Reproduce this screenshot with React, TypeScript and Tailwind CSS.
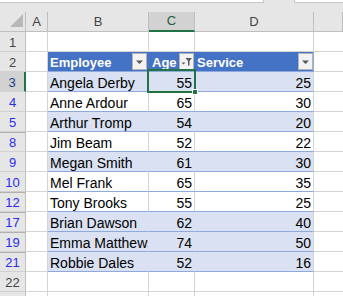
import React from 'react'

type Row = {
  n: number
  kind: 'blank' | 'header' | 'data'
  name?: string
  age?: number
  service?: number
  band?: boolean
  afterHidden?: boolean
}

const rows: Row[] = [
  { n: 1, kind: 'blank' },
  { n: 2, kind: 'header' },
  { n: 3, kind: 'data', name: 'Angela Derby', age: 55, service: 25, band: true },
  { n: 4, kind: 'data', name: 'Anne Ardour', age: 65, service: 30 },
  { n: 5, kind: 'data', name: 'Arthur Tromp', age: 54, service: 20, band: true },
  { n: 8, kind: 'data', name: 'Jim Beam', age: 52, service: 22, afterHidden: true },
  { n: 9, kind: 'data', name: 'Megan Smith', age: 61, service: 30, band: true },
  { n: 10, kind: 'data', name: 'Mel Frank', age: 65, service: 35 },
  { n: 12, kind: 'data', name: 'Tony Brooks', age: 55, service: 25, afterHidden: true },
  { n: 17, kind: 'data', name: 'Brian Dawson', age: 62, service: 40, band: true, afterHidden: true },
  { n: 19, kind: 'data', name: 'Emma Matthews', age: 74, service: 50, band: true, afterHidden: true },
  { n: 21, kind: 'data', name: 'Robbie Dales', age: 52, service: 16, band: true, afterHidden: true },
  { n: 22, kind: 'blank' },
  { n: 23, kind: 'blank' },
]

const font = { fontFamily: '"Liberation Sans", Arial, sans-serif' }

function DropButton({ filtered = false }: { filtered?: boolean }) {
  return (
    <div className="w-[15px] h-[17px] shrink-0 border border-[#b4b4b4] bg-[#f3f3f3] flex items-center justify-center">
      {filtered ? (
        <svg width="13" height="15" viewBox="0 0 13 15">
          <path d="M1.5 8.5 L5.5 8.5 L3.5 10.5 Z" fill="#595959" />
          <path d="M5.5 4 L12 4 L9.5 7 L9.5 11.5 L8 11.5 L8 7 Z" fill="#595959" />
        </svg>
      ) : (
        <svg width="9" height="6" viewBox="0 0 9 6">
          <path d="M1 1.5 L8 1.5 L4.5 5 Z" fill="#595959" />
        </svg>
      )}
    </div>
  )
}

function RowHeader({ row }: { row: Row }) {
  const selected = row.n === 3
  const filtered = row.kind === 'data'
  return (
    <div
      className={`h-[20px] flex items-center justify-center pt-[2px] text-[13px] border-b border-[#d0d0d0] ${
        selected ? 'bg-[#d2d2d2] border-r-2 border-r-[#217346] text-[#1a3a8c]' : 'bg-[#e6e6e6] border-r border-r-[#bfbfbf]'
      } ${filtered && !selected ? 'text-[#2b2bf0]' : ''} ${!filtered ? 'text-[#444444]' : ''} ${
        row.afterHidden ? 'shadow-[inset_0_1px_0_#b0b0b0]' : ''
      }`}
    >
      {row.n <= 22 ? row.n : ''}
    </div>
  )
}

function SheetRow({ row }: { row: Row }) {
  if (row.kind === 'blank') {
    return (
      <>
        <RowHeader row={row} />
        <div className="h-[20px] border-r border-b border-[#d4d4d4]" />
        <div className="h-[20px] border-r border-b border-[#d4d4d4]" />
        <div className="h-[20px] border-r border-b border-[#d4d4d4]" />
        <div className="h-[20px] border-r border-b border-[#d4d4d4]" />
        <div className="h-[20px] border-b border-[#d4d4d4]" />
      </>
    )
  }

  if (row.kind === 'header') {
    return (
      <>
        <RowHeader row={row} />
        <div className="h-[20px] border-r border-b border-[#d4d4d4]" />
        <div className="h-[20px] bg-[#4472c4] border-r border-r-[#4472c4] border-b border-b-[#8ea9db] flex items-center justify-between pl-[2px] pr-[1px] text-white font-bold text-[13px]">
          <span className="pt-[2px]">Employee</span>
          <DropButton />
        </div>
        <div className="h-[20px] bg-[#4472c4] border-r border-r-[#4472c4] border-b border-b-[#8ea9db] flex items-center justify-between pl-[3px] pr-0 text-white font-bold text-[13px]">
          <span className="pt-[2px]">Age</span>
          <DropButton filtered />
        </div>
        <div className="h-[20px] bg-[#4472c4] border-r border-r-[#8ea9db] border-b border-b-[#8ea9db] flex items-center justify-between pl-[2px] pr-0 text-white font-bold text-[13px]">
          <span className="pt-[2px]">Service</span>
          <DropButton />
        </div>
        <div className="h-[20px] border-b border-[#d4d4d4]" />
      </>
    )
  }

  const bg = row.band ? 'bg-[#d9e1f2]' : 'bg-white'
  const inner = row.band ? 'border-r-[#d9e1f2]' : 'border-r-[#d4d4d4]'
  const active = row.n === 3

  return (
    <>
      <RowHeader row={row} />
      <div className="h-[20px] border-r border-b border-[#d4d4d4]" />
      <div className={`h-[20px] ${bg} border-r ${inner} border-b border-b-[#8ea9db] flex items-end leading-[16px] pl-[2px] overflow-hidden whitespace-nowrap text-[14px]`}>
        {row.name}
      </div>
      <div className={`relative h-[20px] ${bg} border-r ${inner} border-b border-b-[#8ea9db] flex items-end leading-[16px] justify-end pr-[2px] text-[14px]`}>
        {row.age}
        {active && (
          <div className="absolute left-[-2px] top-[-3px] w-[49px] h-[24px] border-2 border-[#217346] z-10">
            <div className="absolute left-[43px] top-[18px] w-[6px] h-[6px] bg-[#217346] border border-white" />
          </div>
        )}
      </div>
      <div className={`h-[20px] ${bg} border-r border-r-[#d4d4d4] border-b border-b-[#8ea9db] flex items-end leading-[16px] justify-end pr-[2px] text-[14px]`}>
        {row.service}
      </div>
      <div className="h-[20px] border-b border-[#d4d4d4]" />
    </>
  )
}

export default function App() {
  const cols = ['A', 'B', 'C', 'D', 'E']
  return (
    <div className="w-[343px] h-[296px] overflow-hidden bg-white text-black" style={font}>
      <div className="h-[12px] bg-[#e6e6e6] flex items-start">
        <div className="w-[264px] h-[3px] bg-white border-r border-b border-[#c6c6c6]" />
        <div className="w-[30px]" />
        <div className="flex-1 h-[3px] bg-white border-l border-b border-[#c6c6c6]" />
      </div>
      <div className="grid grid-cols-[26px_22px_101px_46px_119px_1fr]">
        <div className="h-[20px] bg-[#e6e6e6] border-r border-b border-[#bfbfbf] relative">
          <svg className="absolute left-[9px] top-[1px]" width="15" height="15" viewBox="0 0 15 15">
            <path d="M14 1 L14 14 L1 14 Z" fill="#b8b8b8" />
          </svg>
        </div>
        {cols.map((c) => (
          <div
            key={c}
            className={`h-[20px] flex items-center justify-center text-[13px] whitespace-nowrap overflow-hidden ${
              c === 'C'
                ? 'bg-[#d2d2d2] text-[#1e5c38] border-b-2 border-b-[#217346] border-r border-r-[#bfbfbf]'
                : 'bg-[#e6e6e6] text-[#444444] border-b border-b-[#bfbfbf] border-r border-r-[#bfbfbf]'
            } ${c === 'E' ? 'justify-start pl-[28px]' : ''}`}
          >
            {c}
          </div>
        ))}
        {rows.map((r) => (
          <SheetRow key={r.n} row={r} />
        ))}
      </div>
    </div>
  )
}
